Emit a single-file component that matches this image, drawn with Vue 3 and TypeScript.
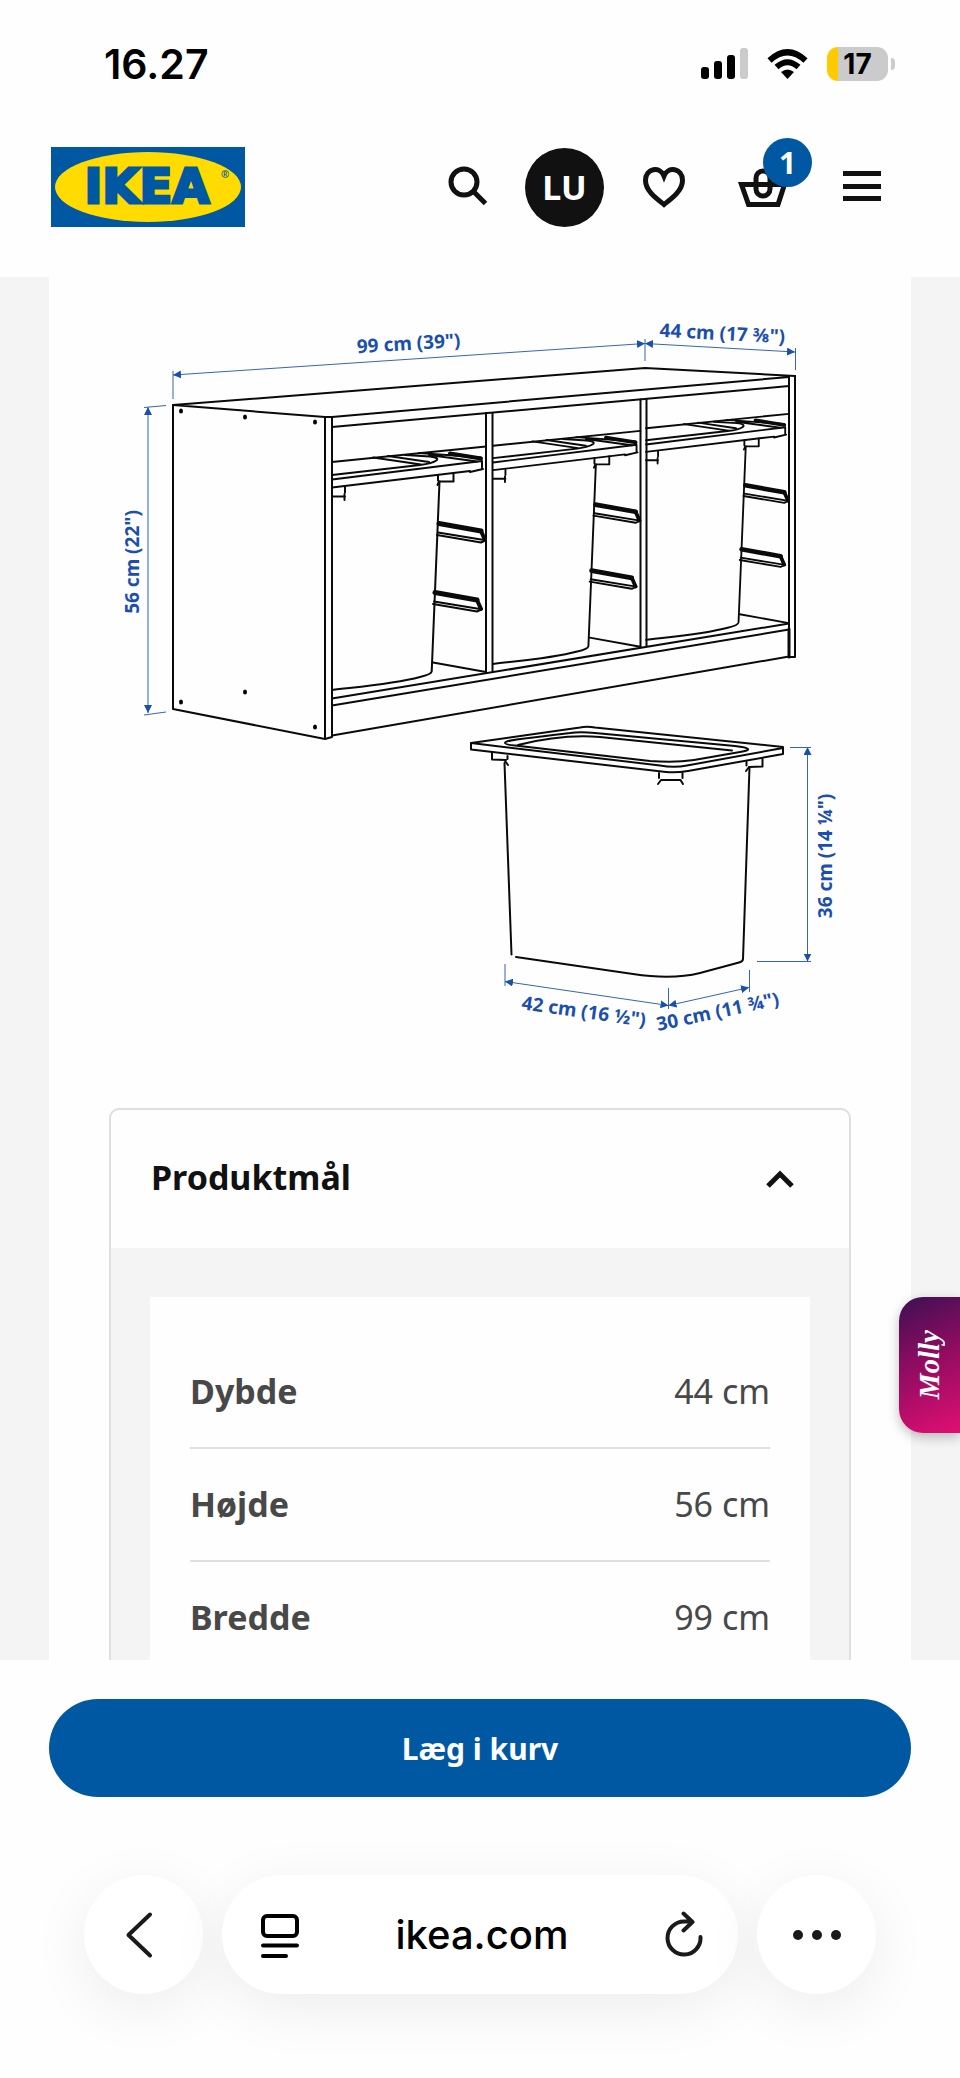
<script setup lang="ts">
import { ref } from 'vue'

interface Bay {
  x: number
  y: number
  scale: number
}

interface Measure {
  label: string
  value: string
}

const bays: Bay[] = [
  { x: 332, y: 479, scale: 1 },
  { x: 493, y: 462, scale: 0.957 },
  { x: 646, y: 444, scale: 0.928 },
]

const runners = [
  { x: 107, y: 44 },
  { x: 103, y: 113 },
]

const screws = [
  [181, 411], [245, 417], [315, 422],
  [181, 702], [245, 692], [315, 727],
]

const measures: Measure[] = [
  { label: 'Dybde', value: '44 cm' },
  { label: 'Højde', value: '56 cm' },
  { label: 'Bredde', value: '99 cm' },
]

const open = ref(true)
</script>

<template>
  <div class="page">
    <header class="top">
      <div class="status">
        <span class="clock">16.27</span>
        <div class="indicators">
          <svg width="48" height="32" viewBox="0 0 48 32" aria-hidden="true">
            <rect x="0" y="19" width="8" height="12" rx="3" />
            <rect x="13" y="13" width="8" height="18" rx="3" />
            <rect x="26" y="7" width="8" height="24" rx="3" />
            <rect x="39" y="0" width="8" height="31" rx="3" fill="#cbcbcb" />
          </svg>
          <svg width="42" height="32" viewBox="0 0 42 32" aria-hidden="true">
            <path d="M2.500 12.500Q20.500 -4 38.500 12.500" fill="none" stroke="#000" stroke-width="6" />
            <path d="M9.500 19Q20.500 9.500 31.500 19" fill="none" stroke="#000" stroke-width="6" />
            <path d="M14 24Q20.500 19 27 24L20.500 31Z" />
          </svg>
          <div class="battery"><span class="cell">17</span><span class="tip"></span></div>
        </div>
      </div>
      <div class="bar">
        <a class="logo" href="#" aria-label="IKEA">
          <svg width="194" height="80" viewBox="0 0 194 80" aria-hidden="true">
            <rect width="194" height="80" fill="#0058a3" />
            <ellipse cx="97" cy="40" rx="93" ry="35" fill="#ffdb00" />
            <text class="wordmark" x="96" y="56" text-anchor="middle">IKEA</text>
            <text class="registered" x="170" y="31">®</text>
          </svg>
        </a>
        <nav class="actions">
          <button class="action" type="button" aria-label="Søg">
            <svg width="48" height="48" viewBox="0 0 48 48" fill="none" stroke="#111" stroke-width="5">
              <circle cx="22" cy="19" r="13" /><path d="M31 28L43.500 40.500" />
            </svg>
          </button>
          <button class="action avatar" type="button">LU</button>
          <button class="action" type="button" aria-label="Favoritter">
            <svg width="48" height="48" viewBox="0 0 48 48" fill="none" stroke="#111" stroke-width="5">
              <path d="M24 41.500C17 36 5.500 28 5.500 17.500C5.500 5 20 3 24 13C28 3 42.500 5 42.500 17.500C42.500 28 31 36 24 41.500Z" />
            </svg>
          </button>
          <button class="action" type="button" aria-label="Kurv">
            <svg width="54" height="48" viewBox="0 0 54 48" fill="none" stroke="#111" stroke-width="5">
              <path d="M5.500 21.500H48.500L42 41.500H12.500Z" />
              <rect x="20" y="8" width="14" height="25" rx="7" />
            </svg>
            <span class="badge">1</span>
          </button>
          <button class="action" type="button" aria-label="Menu">
            <svg width="48" height="48" viewBox="0 0 48 48" fill="none" stroke="#111" stroke-width="5">
              <path d="M5 10.500H43M5 23.500H43M5 35.500H43" />
            </svg>
          </button>
        </nav>
      </div>
    </header>

    <main class="content">
      <div class="scroller">
        <div class="sheet">
          <svg class="drawing" viewBox="49 277 862 831" role="img" aria-label="Mål på opbevaringsmøbel">
            <defs>
              <marker id="arrow" viewBox="0 0 8 8" refX="8" refY="4" markerWidth="8" markerHeight="8" markerUnits="userSpaceOnUse" orient="auto-start-reverse">
                <path d="M0 0L8 4L0 8Z" fill="#1b4fad" />
              </marker>
            </defs>

            <g class="ink">
              <path d="M173 405L645 368L795 376M173 405L325 417H332L789 377M332 427L789 386" />
              <path d="M173 405V709L325 739L332 737V417M325 417V739" />
              <path d="M486 413V672M492.500 413V671M640.500 399.500V647M646.500 399V646M789 377V657H795V376" />
              <path d="M332 698.500L789 623.500M332 705.500L789 629.500M332 735.500L789 656.500" />
              <path d="M789 629V657" stroke-width="3" />
            </g>
            <ellipse v-for="(s, i) in screws" :key="i" :cx="s[0]" :cy="s[1]" rx="2" ry="2.500" />

            <g v-for="bay in bays" :key="bay.x" class="ink" :transform="`translate(${bay.x} ${bay.y}) scale(${bay.scale})`">
              <path d="M0 -17L154 -32.500" />
              <path d="M0 -4L88 -14C104 -16 112 -21 98 -22.500L73 -24M41 -21.500L89 -14.500M56 -23L97 -17" />
              <path d="M0 0.500L150 -18V-10M0 8.500L138 -8M138 -7L151 -10" />
              <path d="M87 -26L149 -21.500M97 -24L145 -17.500" />
              <path d="M118 -25.500L149 -20.500" stroke-width="4" />
              <path d="M0 17.500H13M13 8V13.500M12.500 15V21M106 -4V1.500M105.500 6L107 2.500H121.500V-6" />
              <path d="M107.500 2.500L99.700 192.500Q99 195.500 88 198C62 205 30 207.500 0 211" />
              <path d="M101 183.500L154 193" />
              <g v-for="r in runners" :key="r.y" :transform="`translate(${r.x} ${r.y})`">
                <path d="M0 0.500L42 8" stroke-width="5" />
                <path d="M42 8L46 17" stroke-width="4" />
                <path d="M-1 9.500L45 17M-2 12L42 19.500L47 17" />
              </g>
            </g>

            <g class="ink">
              <path d="M471 743L580 727.500Q587 726 595 727.500L783 747V754L688 771Q676 773 666 772L471 749.500Z" />
              <path d="M471 743L660 765.500Q674 768 687 765.500L783 748" />
              <path d="M505 743C505 740 515 740 570 733Q580 731.500 595 733L735 746C751 748 752 750 740 752L694 760Q675 763 650 761L515 745.500Q505 744.500 505 743Z" />
              <path d="M518 745C550 737 575 735 600 737L732 750.500" />
              <path d="M492 752V759.500L506 760M507.500 756V759M505 761L508 765M762.500 759V766.500L749 767M746.500 762V765.500M746 771L749 767" />
              <path d="M659 773V778M682.500 773V778M658 784L661 780H680.500L683 784" />
              <path d="M504.500 763L511.500 954.500M516 957L633 974Q672 980 700 973L739 962.500Q743 961.500 743 959L749.500 767" />
            </g>

            <g class="dimension">
              <path class="arrowed" d="M173 375L645 343.500" />
              <path class="arrowed" d="M645 343.500L795 352" />
              <path class="arrowed" d="M148 407V713" />
              <path class="arrowed" d="M807.500 747V961.500" />
              <path class="arrowed" d="M505 981.500L668.500 1005.500" />
              <path class="arrowed" d="M668.500 1005.500L749 987.500" />
              <path d="M173 371V399M645 339V361M795.500 348V370M144 407.500L166 405.500M144 715L166 712" />
              <path d="M790 747.500H811M757 961.500H811M505 964V986M668.500 988V1009M749.500 970V992" />
            </g>
            <g class="caption" text-anchor="middle">
              <text transform="translate(409 350) rotate(-3.500)">99 cm (39")</text>
              <text transform="translate(722 340) rotate(3)">44 cm (17 ⅜")</text>
              <text transform="translate(139 562) rotate(-90)">56 cm (22")</text>
              <text transform="translate(832 856) rotate(-90)">36 cm (14 ¼")</text>
              <text transform="translate(583 1018) rotate(8)">42 cm (16 ½")</text>
              <text transform="translate(719 1018) rotate(-12)">30 cm (11 ¾")</text>
            </g>
          </svg>

          <section class="card">
            <h2 class="heading">
              <button class="toggle" type="button" :aria-expanded="open" @click="open = !open">
                <span class="title">Produktmål</span>
                <svg class="chevron" :class="{ closed: !open }" width="28" height="18" viewBox="0 0 28 18" fill="none" stroke="#111" stroke-width="5">
                  <path d="M2 16L14 4L26 16" />
                </svg>
              </button>
            </h2>
            <div v-if="open" class="body">
              <table class="measures">
                <tbody>
                  <tr v-for="m in measures" :key="m.label">
                    <th scope="row">{{ m.label }}</th>
                    <td>{{ m.value }}</td>
                  </tr>
                </tbody>
              </table>
            </div>
          </section>
        </div>
      </div>
      <button class="molly" type="button"><span>Molly</span></button>
    </main>

    <footer class="bottom">
      <button class="buy" type="button">Læg i kurv</button>
      <div class="browser">
        <button class="round" type="button" aria-label="Tilbage">
          <svg width="48" height="48" viewBox="0 0 48 48" fill="none" stroke="#1a1a1a" stroke-width="4" stroke-linecap="round" stroke-linejoin="round">
            <path d="M30 3.500L8.500 24L30 44.500" />
          </svg>
        </button>
        <div class="address">
          <button class="plain" type="button" aria-label="Sideindstillinger">
            <svg width="40" height="48" viewBox="0 0 40 48" fill="none" stroke="#000" stroke-width="4" stroke-linecap="round">
              <rect x="3" y="5" width="34" height="20" rx="4" /><path d="M3 34.500H37M3 45H26" />
            </svg>
          </button>
          <a class="domain" href="#">ikea.com</a>
          <button class="plain" type="button" aria-label="Genindlæs">
            <svg width="40" height="48" viewBox="0 0 40 48" fill="none" stroke="#1a1a1a" stroke-width="4" stroke-linecap="round" stroke-linejoin="round">
              <path d="M36.500 26A16.500 16.500 0 1 1 20 10.500H28M19.500 2.500L28.500 11L19.500 19.500" />
            </svg>
          </button>
        </div>
        <button class="round" type="button" aria-label="Mere">
          <svg width="48" height="12" viewBox="0 0 48 12" fill="#1a1a1a">
            <circle cx="5" cy="6" r="5" /><circle cx="24" cy="6" r="5" /><circle cx="43" cy="6" r="5" />
          </svg>
        </button>
      </div>
    </footer>
  </div>
</template>

<style>
body {
  margin: 0;
  background: #fefefe;
}
</style>

<style scoped>
.page {
  display: flex;
  flex-direction: column;
  height: 100vh;
  font-family: "Noto Sans", sans-serif;
  color: #111;
  background: #fefefe;
}
button {
  padding: 0;
  border: 0;
  background: none;
  font-family: inherit;
  color: inherit;
  cursor: pointer;
}
svg {
  display: block;
}
.top {
  flex: none;
  padding-bottom: 31px;
}
.status {
  display: flex;
  align-items: center;
  justify-content: space-between;
  height: 128px;
  padding: 0 65px 0 104px;
  font-family: Inter, sans-serif;
  color: #000;
}
.clock {
  font-size: 41px;
  font-weight: 600;
}
.indicators {
  display: flex;
  align-items: center;
  gap: 18px;
}
.battery {
  display: flex;
  align-items: center;
  gap: 3px;
}
.cell {
  width: 61px;
  height: 34px;
  border-radius: 11px;
  background: linear-gradient(90deg, #ffcb00 11px, #cbcbcb 11px);
  font-size: 28px;
  font-weight: 700;
  line-height: 34px;
  text-align: center;
}
.tip {
  width: 4px;
  height: 12px;
  border-radius: 0 6px 6px 0;
  background: #cbcbcb;
}
.bar {
  display: flex;
  align-items: center;
  justify-content: space-between;
  height: 118px;
  padding: 0 59px 0 51px;
}
.wordmark {
  font: 700 48px "DejaVu Sans", sans-serif;
  fill: #0058a3;
  stroke: #0058a3;
  stroke-width: 3px;
}
.registered {
  font: 700 10px "Noto Sans", sans-serif;
  fill: #0058a3;
}
.actions {
  display: flex;
  gap: 20px;
}
.action {
  position: relative;
  display: flex;
  align-items: center;
  justify-content: center;
  width: 79px;
  height: 79px;
  border-radius: 50%;
}
.avatar {
  background: #111;
  color: #fff;
  font-size: 34px;
  font-weight: 700;
}
.badge {
  position: absolute;
  top: -10px;
  right: -10px;
  width: 49px;
  height: 49px;
  border-radius: 50%;
  background: #0058a3;
  color: #fff;
  font-size: 30px;
  font-weight: 700;
  line-height: 49px;
}
.content {
  position: relative;
  flex: 1;
  min-height: 0;
  background: #f4f4f4;
}
.scroller {
  height: 100%;
  overflow-y: auto;
  scrollbar-width: none;
}
.sheet {
  margin: 0 49px;
  padding: 0 60px 48px;
  background: #fefefe;
}
.drawing {
  width: calc(100% + 120px);
  margin: 0 -60px;
}
.ink {
  fill: none;
  stroke: #0a0a0a;
  stroke-width: 2;
  stroke-linejoin: round;
  stroke-linecap: round;
}
.dimension {
  fill: none;
  stroke: #3565b5;
  stroke-width: 1;
}
.arrowed {
  marker-start: url(#arrow);
  marker-end: url(#arrow);
}
.caption {
  fill: #1b4fad;
  font-size: 19px;
  font-weight: 700;
}
.card {
  border: 2px solid #dfdfdf;
  border-radius: 10px;
  overflow: hidden;
}
.heading {
  margin: 0;
}
.toggle {
  display: flex;
  align-items: center;
  justify-content: space-between;
  width: 100%;
  height: 138px;
  padding: 0 55px 0 40px;
  font-size: 34px;
  font-weight: 700;
}
.title {
  padding-bottom: 4px;
}
.chevron.closed {
  transform: rotate(180deg);
}
.body {
  padding: 49px 39px;
  background: #f4f4f4;
}
.measures {
  display: block;
  padding: 39px 40px;
  background: #fefefe;
  color: #484848;
  font-size: 34px;
  line-height: 46px;
}
.measures tbody {
  display: block;
}
.measures tr {
  display: flex;
  justify-content: space-between;
  padding: 32px 0 33px;
  border-bottom: 2px solid #dfdfdf;
}
.measures th,
.measures td {
  padding: 0;
}
.molly {
  position: absolute;
  top: 1020px;
  right: 0;
  display: flex;
  align-items: center;
  justify-content: center;
  width: 61px;
  height: 136px;
  border-radius: 24px 0 0 24px;
  background: linear-gradient(155deg, #3c1053 0%, #8e0c60 45%, #e00f72 100%);
  box-shadow: 0 4px 12px rgba(0, 0, 0, 0.25);
  color: #fff;
  font: italic 700 29px "Liberation Serif", serif;
}
.molly span {
  writing-mode: vertical-rl;
  transform: rotate(180deg);
}
.bottom {
  flex: none;
  padding: 39px 49px 84px;
  overflow: hidden;
}
.buy {
  display: block;
  width: 100%;
  height: 98px;
  border-radius: 49px;
  background: #0058a3;
  color: #fff;
  font-size: 30px;
  font-weight: 700;
}
.browser {
  display: flex;
  gap: 19px;
  margin-top: 78px;
  padding: 0 35px;
}
.round,
.address {
  height: 119px;
  border-radius: 60px;
  background: #fff;
  box-shadow: 0 14px 60px rgba(0, 0, 0, 0.07);
}
.round {
  display: flex;
  align-items: center;
  justify-content: center;
  flex: none;
  width: 119px;
}
.address {
  display: flex;
  align-items: center;
  justify-content: space-between;
  flex: 1;
  padding: 0 34px 0 38px;
}
.domain {
  color: #000;
  font: 500 40px Inter, sans-serif;
  text-decoration: none;
}
</style>
